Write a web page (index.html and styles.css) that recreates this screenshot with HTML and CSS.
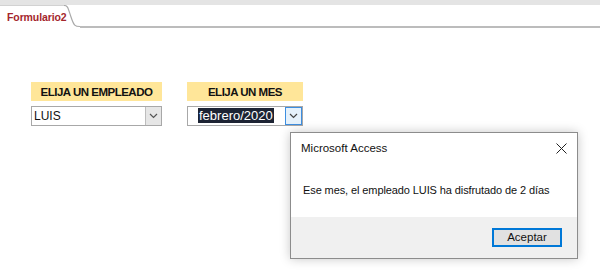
FILE: index.html
```html
<!DOCTYPE html>
<html lang="es">

<head>
    <meta charset="UTF-8">
    <title>Formulario2</title>
    <link rel="stylesheet" href="styles.css">
</head>

<body>
    <div class="tabbar">
        <div class="tab">Formulario2</div>
        <svg class="tab-curve" width="16" height="23" viewBox="0 0 16 23">
            <path d="M0 0.5 C4 0.5 4 3 7 12 C10 21 11 21.5 16 21.5" fill="none" stroke="#a9a9a9" stroke-width="1.2" />
        </svg>
        <div class="tab-rest"></div>
    </div>

    <div class="form">
        <div class="field field-emp">
            <div class="caption">ELIJA UN EMPLEADO</div>
            <div class="combo">
                <span class="value">LUIS</span>
                <span class="drop">
                    <svg width="9" height="6" viewBox="0 0 9 6"><path d="M1 1 L4.5 4.5 L8 1" fill="none" stroke="#555" stroke-width="1.2" /></svg>
                </span>
            </div>
        </div>
        <div class="field field-mes">
            <div class="caption">ELIJA UN MES</div>
            <div class="combo combo-focus">
                <span class="value"><span class="sel">febrero/2020</span></span>
                <span class="drop">
                    <svg width="9" height="6" viewBox="0 0 9 6"><path d="M1 1 L4.5 4.5 L8 1" fill="none" stroke="#444" stroke-width="1.2" /></svg>
                </span>
            </div>
        </div>
    </div>

    <!-- cuadro de mensaje encima del formulario -->
    <div class="msgbox">
        <div class="msg-title">
            <span>Microsoft Access</span>
            <svg class="msg-close" width="11" height="11" viewBox="0 0 11 11">
                <path d="M0.5 0.5 L10.5 10.5 M10.5 0.5 L0.5 10.5" stroke="#222" stroke-width="1" />
            </svg>
        </div>
        <div class="msg-body">Ese mes, el empleado LUIS ha disfrutado de 2 días</div>
        <div class="msg-foot">
            <div class="msg-btn">Aceptar</div>
        </div>
    </div>
</body>

</html>
```

FILE: styles.css
```css
body {
    margin: 0;
    background: #fff;
    font-family: "Liberation Sans", Arial, sans-serif;
    position: relative;
    height: 277px;
    overflow: hidden;
}

/* pestaña del formulario */
.tabbar {
    display: flex;
    background: linear-gradient(#e4e4e4 5px, #fff 5px);
    padding-top: 5px;
    height: 23px;
}

.tab {
    width: 64px;
    flex-shrink: 0;
    white-space: nowrap;
    padding-left: 7px;
    font: bold 10.5px/23px "Liberation Sans", Arial, sans-serif;
    letter-spacing: -0.1px;
    color: #a4262c;
    border-top: 1px solid #d2d2d2;
    box-sizing: border-box;
    height: 23px;
}

.tab-curve {
    display: block;
    flex-shrink: 0;
}

.tab-rest {
    flex: 1;
    border-bottom: 2px solid #bcbcbc;
    box-sizing: border-box;
}

/* campos */
.form {
    display: flex;
    gap: 25px;
    padding: 54px 0 0 31px;
}

.field {
    display: flex;
    flex-direction: column;
    gap: 5px;
}

.field-emp {
    width: 131px;
}

.field-mes {
    width: 116px;
}

.caption {
    height: 19px;
    background: #ffe699;
    font: bold 11.5px/20px "Liberation Sans", Arial, sans-serif;
    letter-spacing: -0.5px;
    color: #111;
    text-align: center;
}

.combo {
    display: flex;
    height: 20px;
    border: 1px solid #a8a8a8;
    box-sizing: border-box;
    background: #fff;
}

.combo .value {
    flex: 1;
    font-size: 12px;
    line-height: 18px;
    padding-left: 2px;
    color: #111;
}

.combo-focus .value {
    padding-left: 10px;
    font-size: 13px;
}

.sel {
    background: #1c2333;
    color: #fff;
    padding: 0 1px;
}

.drop {
    width: 15px;
    height: 18px;
    display: flex;
    align-items: center;
    justify-content: center;
    background: #e6e6e6;
    border-left: 1px solid #bdbdbd;
}

.combo-focus .drop {
    background: #e5f1fb;
    border: 1px solid #3d8ee0;
    height: 16px;
    margin-left: 8px;
}

/* cuadro de mensaje */
.msgbox {
    position: absolute;
    left: 290px;
    top: 132px;
    width: 288px;
    height: 127px;
    border: 1px solid #8c8c8c;
    box-sizing: border-box;
    background: #fff;
    box-shadow: 0 0 10px rgba(0, 0, 0, .22);
    display: flex;
    flex-direction: column;
    font-size: 11.5px;
    color: #111;
}

.msg-title {
    height: 30px;
    display: flex;
    align-items: center;
    justify-content: space-between;
    padding: 0 10px 0 10px;
}

.msg-body {
    flex: 1;
    padding: 21px 0 0 12px;
    font-size: 11px;
    letter-spacing: -0.1px;
}

.msg-foot {
    height: 41px;
    background: #f0f0f0;
    display: flex;
    justify-content: flex-end;
    align-items: center;
    padding-right: 15px;
}

.msg-btn {
    width: 70px;
    height: 19px;
    box-sizing: border-box;
    border: 2px solid #0078d7;
    background: #e1e1e1;
    text-align: center;
    line-height: 15px;
    font-size: 11.5px;
}
```
